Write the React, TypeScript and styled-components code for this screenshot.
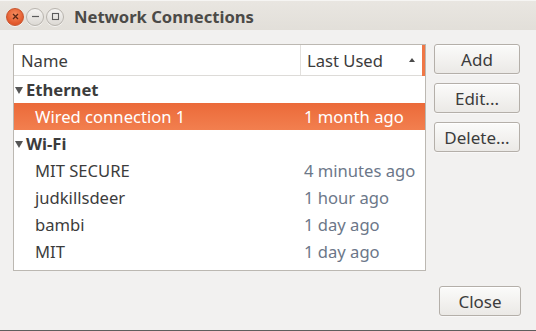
import React from "react";
import styled, { createGlobalStyle } from "styled-components";

const Global = createGlobalStyle`
  html, body { margin: 0; padding: 0; background: #f2f1f0; }
  body { font-family: "Noto Sans", "Open Sans", "DejaVu Sans", sans-serif; }
  * { box-sizing: border-box; }
`;

const Window = styled.div`
  width: 536px;
  height: 331px;
  display: flex;
  flex-direction: column;
  background: #f2f1f0;
  border-bottom: 1px solid #5e5e5e;
  overflow: hidden;
`;

const TitleBar = styled.div`
  height: 30px;
  flex: none;
  display: flex;
  align-items: center;
  padding: 2px 0 0 6px;
  background: linear-gradient(#e9e6e1, #e2dfd9);
  border-top: 1px solid #f6f5f3;
`;

const WinButtons = styled.div`
  display: flex;
  gap: 2px;
  align-items: center;
`;

const WinButton = styled.div<{ $close?: boolean }>`
  width: 18px;
  height: 18px;
  border-radius: 50%;
  display: flex;
  align-items: center;
  justify-content: center;
  background: ${(p) =>
    p.$close
      ? "radial-gradient(circle at 50% 35%, #f68e60, #e2582b 70%)"
      : "linear-gradient(#f6f5f3, #dcd9d4)"};
  border: 1px solid ${(p) => (p.$close ? "#c8542c" : "#b8b4ae")};
  box-shadow: 0 1px 0 rgba(255,255,255,0.6);
`;

const Title = styled.div`
  margin-left: 10px;
  font-size: 16.6px;
  font-weight: bold;
  color: #4b4a47;
`;

const Body = styled.div`
  flex: 1;
  display: flex;
  flex-direction: column;
  padding: 14px 16px 0 13px;
`;

const Main = styled.div`
  display: flex;
  gap: 8px;
  align-items: flex-start;
`;

const ListFrame = styled.div`
  width: 413px;
  height: 227px;
  background: #ffffff;
  border: 1px solid #bcb8b2;
  overflow: hidden;
  display: flex;
  flex-direction: column;
`;

const Header = styled.div`
  position: relative;
  height: 31px;
  flex: none;
  display: grid;
  grid-template-columns: 286px 1fr;
  border-bottom: 1px solid #dddbd8;
`;

const HeaderCell = styled.div<{ $pad: number; $sep?: boolean }>`
  display: flex;
  align-items: center;
  padding-left: ${(p) => p.$pad}px;
  padding-right: 10px;
  font-size: 16.6px;
  color: #3c3c3c;
  border-left: ${(p) => (p.$sep ? "1px solid #e2e0dd" : "none")};
  justify-content: space-between;
`;

const SortArrow = styled.span`
  width: 0;
  height: 0;
  border-left: 3.5px solid transparent;
  border-right: 3.5px solid transparent;
  border-bottom: 4px solid #4a4a4a;
`;

const ScrollMark = styled.div`
  position: absolute;
  right: -1px;
  top: -1px;
  bottom: -1px;
  width: 4px;
  background: #f07746;
`;

const Row = styled.div<{ $selected?: boolean }>`
  height: 27px;
  flex: none;
  display: grid;
  grid-template-columns: 286px 1fr;
  align-items: center;
  font-size: 16.6px;
  background: ${(p) =>
    p.$selected ? "linear-gradient(#eb6a39, #f27f4f)" : "transparent"};
  color: ${(p) => (p.$selected ? "#ffffff" : "#3c3c3c")};
`;

const GroupName = styled.div`
  display: flex;
  align-items: center;
  padding-left: 1px;
  font-weight: bold;
  color: #3c3c3c;
`;

const Expander = styled.span`
  width: 0;
  height: 0;
  border-left: 4.5px solid transparent;
  border-right: 4.5px solid transparent;
  border-top: 7px solid #555555;
  margin-right: 3px;
  margin-top: 1px;
`;

const NameCell = styled.div`
  padding-left: 21px;
  white-space: nowrap;
`;

const TimeCell = styled.div<{ $selected?: boolean }>`
  padding-left: 4px;
  white-space: nowrap;
  color: ${(p) => (p.$selected ? "#ffffff" : "#6c7789")};
`;

const ButtonColumn = styled.div`
  display: flex;
  flex-direction: column;
  gap: 9px;
`;

const Button = styled.button<{ $w: number }>`
  width: ${(p) => p.$w}px;
  height: 30px;
  padding: 0;
  border: 1px solid #b4afa9;
  border-radius: 3px;
  background: linear-gradient(#fbfbfa, #ebe9e6);
  box-shadow: inset 0 1px 0 #ffffff, 0 1px 0 rgba(255,255,255,0.5);
  font-family: "Noto Sans", "Open Sans", "DejaVu Sans", sans-serif;
  font-size: 17px;
  color: #3c3c3c;
`;

const Footer = styled.div`
  display: flex;
  justify-content: flex-end;
  padding-top: 15px;
  margin-right: -1px;
`;

type Item = { name: string; time: string; selected?: boolean };
const groups: { name: string; items: Item[] }[] = [
  { name: "Ethernet", items: [{ name: "Wired connection 1", time: "1 month ago", selected: true }] },
  {
    name: "Wi-Fi",
    items: [
      { name: "MIT SECURE", time: "4 minutes ago" },
      { name: "judkillsdeer", time: "1 hour ago" },
      { name: "bambi", time: "1 day ago" },
      { name: "MIT", time: "1 day ago" },
      { name: "access", time: "1 day ago" },
    ],
  },
];

export default function App() {
  return (
    <>
      <Global />
      <Window>
        <TitleBar>
          <WinButtons>
            <WinButton $close>
              <svg width="9" height="9" viewBox="0 0 9 9">
                <path d="M2 2L7 7M7 2L2 7" stroke="#5a2614" strokeWidth="1.3" />
              </svg>
            </WinButton>
            <WinButton>
              <svg width="9" height="9" viewBox="0 0 9 9">
                <path d="M1 4.5H8" stroke="#5c5c5c" strokeWidth="1.2" />
              </svg>
            </WinButton>
            <WinButton>
              <svg width="9" height="9" viewBox="0 0 9 9">
                <rect x="1.5" y="1.5" width="6" height="6" fill="none" stroke="#5c5c5c" strokeWidth="1.1" />
              </svg>
            </WinButton>
          </WinButtons>
          <Title>Network Connections</Title>
        </TitleBar>
        <Body>
          <Main>
            <ListFrame>
              <Header>
                <HeaderCell $pad={7}>Name</HeaderCell>
                <HeaderCell $pad={6} $sep>
                  Last Used
                  <SortArrow />
                </HeaderCell>
                <ScrollMark />
              </Header>
              {groups.map((g) => (
                <React.Fragment key={g.name}>
                  <Row>
                    <GroupName>
                      <Expander />
                      {g.name}
                    </GroupName>
                    <div />
                  </Row>
                  {g.items.map((it) => (
                    <Row key={it.name} $selected={it.selected}>
                      <NameCell>{it.name}</NameCell>
                      <TimeCell $selected={it.selected}>{it.time}</TimeCell>
                    </Row>
                  ))}
                </React.Fragment>
              ))}
            </ListFrame>
            <ButtonColumn>
              <Button $w={86}>Add</Button>
              <Button $w={86}>Edit...</Button>
              <Button $w={86}>Delete...</Button>
            </ButtonColumn>
          </Main>
          <Footer>
            <Button $w={82}>Close</Button>
          </Footer>
        </Body>
      </Window>
    </>
  );
}
